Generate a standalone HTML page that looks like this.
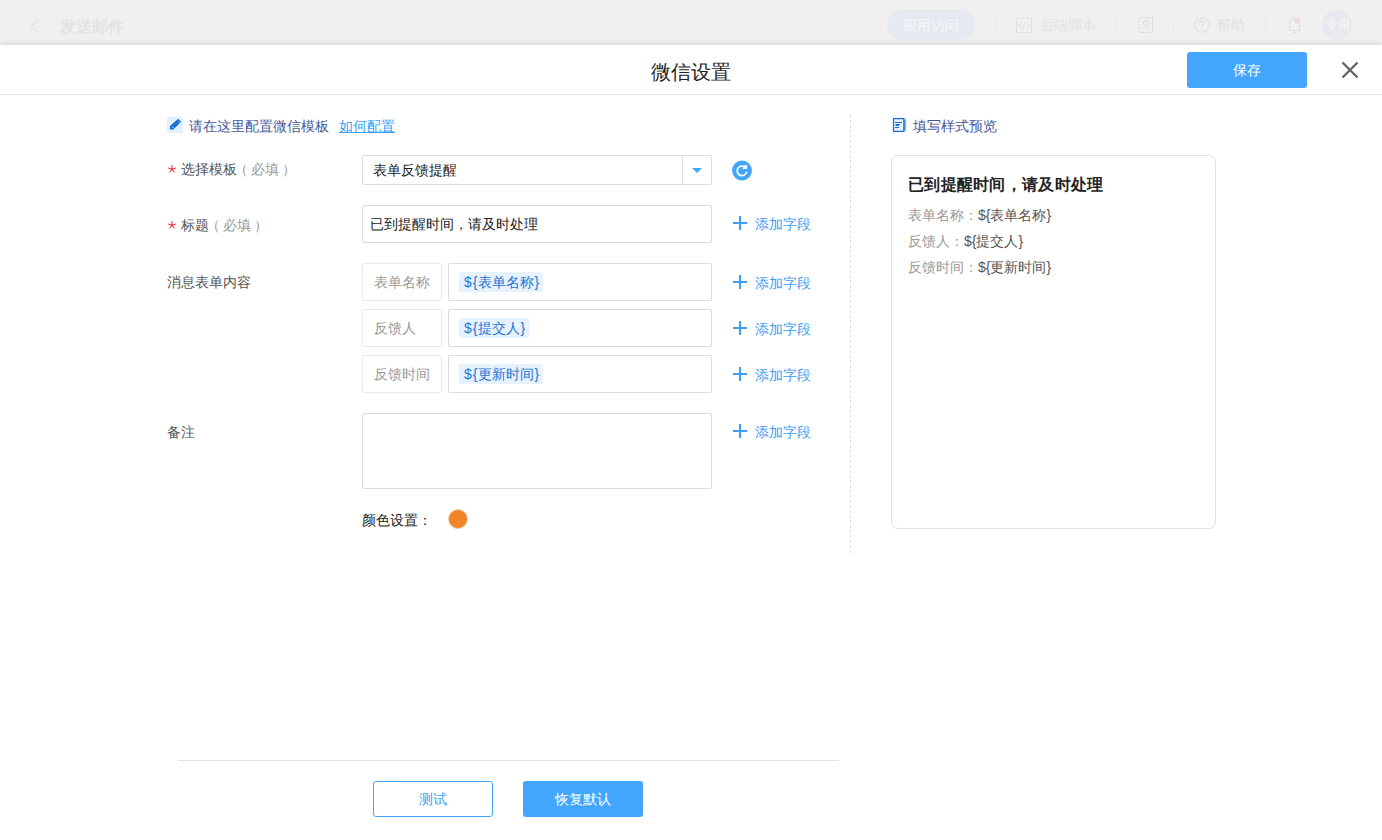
<!DOCTYPE html>
<html><head><meta charset="utf-8">
<style>
*{box-sizing:border-box;margin:0;padding:0}
html,body{width:1382px;height:840px;overflow:hidden;background:#fff;font-family:"Liberation Sans",sans-serif;font-size:14px;color:#333}
.a{position:absolute;white-space:nowrap}
#top{position:absolute;left:0;top:0;width:1382px;height:45px;background:#f0f0f0}
#modal{position:absolute;left:0;top:45px;width:1382px;height:795px;background:#fff;box-shadow:0 -1px 5px rgba(0,0,0,0.13)}
.t14{font-size:14px;line-height:16px}
.box{position:absolute;border:1px solid #ddd;border-radius:2px;background:#fff}
.lbox{position:absolute;border:1px solid #ebebeb;border-radius:2px;background:#fff}
.tag{position:absolute;background:#e6f2fd;border-radius:2px;color:#1f76d6}
.add{position:absolute;color:#3d9ef0}
.plus{position:absolute;width:14px;height:14px}
.plus:before{content:"";position:absolute;left:0;top:6px;width:14px;height:2px;background:#3d9ef0}
.plus:after{content:"";position:absolute;left:6px;top:0;width:2px;height:14px;background:#3d9ef0}
</style></head><body>
<div id="top">
  <svg class="a" style="left:29px;top:19px" width="11" height="15" viewBox="0 0 11 15"><path d="M9.5 1 L2 7.5 L9.5 14" fill="none" stroke="#e3e8ef" stroke-width="2"/></svg>
  <div class="a" style="left:60px;top:18px;font-size:16px;line-height:18px;font-weight:bold;color:#e3e3e3">发送邮件</div>
  <div class="a" style="left:887px;top:10px;width:88px;height:30px;border-radius:15px;background:#e5eaf0"></div>
  <div class="a" style="left:903px;top:17px;font-size:14px;line-height:16px;color:#f6f8fa">应用访问</div>
  <div class="a" style="left:995px;top:18px;width:1px;height:14px;background:#e9e9e9"></div>
  <svg class="a" style="left:1016px;top:18px" width="16" height="15" viewBox="0 0 16 15" fill="none" stroke="#e0e0e0" stroke-width="1.1"><rect x="0.5" y="0.5" width="15" height="14" rx="1"/><path d="M5 5 L3 7.5 L5 10 M11 5 L13 7.5 L11 10 M9 4.5 L7 10.5"/></svg>
  <div class="a" style="left:1040px;top:17px;font-size:14px;line-height:16px;color:#e2e2e2">后端脚本</div>
  <div class="a" style="left:1116px;top:18px;width:1px;height:14px;background:#e9e9e9"></div>
  <svg class="a" style="left:1136px;top:16px" width="18" height="18" viewBox="0 0 18 18" fill="none" stroke="#e0e0e0" stroke-width="1.1"><path d="M3.5 4.5 V1.5 H16.5 V16.5 H3.5 V13.5 M3.5 6 V6.5 M3.5 11 V11.5"/><path d="M1 6 H4 M1 9 H4 M1 12 H4"/><circle cx="10" cy="7" r="2.6"/><path d="M6 13 Q10 8 14 13"/></svg>
  <div class="a" style="left:1173px;top:18px;width:1px;height:14px;background:#e9e9e9"></div>
  <svg class="a" style="left:1194px;top:17px" width="16" height="16" viewBox="0 0 16 16" fill="none" stroke="#e0e0e0" stroke-width="1.1"><circle cx="8" cy="8" r="7.3"/><path d="M5.8 6.2 Q5.8 3.8 8 3.8 Q10.2 3.8 10.2 6 Q10.2 7.2 8.6 8 Q8 8.4 8 9.8"/><path d="M8 11.4 V12.4"/></svg>
  <div class="a" style="left:1217px;top:17px;font-size:14px;line-height:16px;color:#e0e0e0">帮助</div>
  <div class="a" style="left:1265px;top:18px;width:1px;height:14px;background:#e9e9e9"></div>
  <svg class="a" style="left:1287px;top:16px" width="16" height="18" viewBox="0 0 16 18" fill="none" stroke="#e0e0e0" stroke-width="1.1"><path d="M1.5 14.5 H13.5 M2.5 14.5 V7.5 Q2.5 3 7.5 1.5 Q12.5 3 12.5 7.5 V14.5"/><path d="M6 16.5 H9"/></svg>
  <div class="a" style="left:1294px;top:18px;width:6px;height:6px;border-radius:50%;background:#efdede"></div>
  <div class="a" style="left:1322px;top:10px;width:30px;height:30px;border-radius:50%;background:#e8e9ef"></div>
  <div class="a" style="left:1326px;top:17px;font-size:12px;line-height:14px;color:#f6f7fa">专用</div>
</div>
<div id="modal"></div>

<!-- header -->
<div class="a" style="left:651px;top:61px;font-size:20px;line-height:22px;color:#222">微信设置</div>
<div class="a" style="left:1187px;top:52px;width:120px;height:36px;border-radius:3px;background:#42a6ff;color:#fff;text-align:center;line-height:36px;font-size:14px">保存</div>
<svg class="a" style="left:1341px;top:61px" width="18" height="18" viewBox="0 0 18 18"><path d="M1.5 1.5 L16.5 16.5 M16.5 1.5 L1.5 16.5" stroke="#666" stroke-width="2.4" fill="none"/></svg>
<div class="a" style="left:0;top:94px;width:1382px;height:1px;background:#e3e3e3"></div>


<!-- form -->
<div class="a" style="left:167px;top:117px;width:16px;height:16px;border-radius:2px;background:#e2effd"></div>
<svg class="a" style="left:167px;top:117px" width="16" height="16" viewBox="0 0 16 16"><path d="M3 8.9 L11.2 1.8 L14.2 4.8 L6.4 12.6 L3 12.6Z" fill="#1b6fd6"/><path d="M5.2 9.6 L6.9 11.3 M11.6 4.4 L12.9 5.7" stroke="#e2effd" stroke-width="0.9"/></svg>
<div class="a t14" style="left:189px;top:118px;color:#4a5899">请在这里配置微信模板</div>
<div class="a t14" style="left:339px;top:118px;color:#3a9ef5;text-decoration:underline">如何配置</div>

<svg class="a" style="left:166px;top:163px" width="12" height="12" viewBox="0 0 12 12"><path d="M6.00 6.20 L6.00 2.60 M6.00 6.20 L9.42 5.09 M6.00 6.20 L8.12 9.11 M6.00 6.20 L3.88 9.11 M6.00 6.20 L2.58 5.09 " stroke="#f01820" stroke-width="1" stroke-linecap="round"/></svg>
<div class="a t14" style="left:181px;top:161px;color:#555">选择模板<span style="color:#999"><span style="position:relative;left:-3px">（</span>必填<span style="position:relative;left:3px">）</span></span></div>
<div class="box" style="left:362px;top:155px;width:350px;height:30px"></div>
<div class="a" style="left:682px;top:156px;width:1px;height:28px;background:#ddd"></div>
<svg class="a" style="left:692px;top:168px" width="10" height="5" viewBox="0 0 10 5"><path d="M0 0 L10 0 L5 5Z" fill="#42a6ff"/></svg>
<div class="a t14" style="left:373px;top:162px;color:#222">表单反馈提醒</div>
<svg class="a" style="left:732px;top:160px" width="20" height="21" viewBox="0 0 20 21"><circle cx="10" cy="10.5" r="10" fill="#42a6ff"/><path d="M14.73 11.63 A4.8 4.8 0 1 1 12.4 6.64" fill="none" stroke="#fff" stroke-width="1.7"/><path d="M12.6 4.9 L15.2 4.9 L15.2 8.9 L10.4 8.9Z" fill="#fff"/></svg>

<svg class="a" style="left:166px;top:219px" width="12" height="12" viewBox="0 0 12 12"><path d="M6.00 6.20 L6.00 2.60 M6.00 6.20 L9.42 5.09 M6.00 6.20 L8.12 9.11 M6.00 6.20 L3.88 9.11 M6.00 6.20 L2.58 5.09 " stroke="#f01820" stroke-width="1" stroke-linecap="round"/></svg>
<div class="a t14" style="left:181px;top:217px;color:#555">标题<span style="color:#999"><span style="position:relative;left:-3px">（</span>必填<span style="position:relative;left:3px">）</span></span></div>
<div class="box" style="left:362px;top:205px;width:350px;height:38px"></div>
<div class="a t14" style="left:370px;top:216px;color:#222">已到提醒时间，请及时处理</div>
<div class="plus" style="left:733px;top:216px"></div>
<div class="a t14 add" style="left:755px;top:216px">添加字段</div>

<div class="a t14" style="left:167px;top:274px;color:#555">消息表单内容</div>
<div class="lbox" style="left:362px;top:263px;width:80px;height:38px"></div>
<div class="a t14" style="left:374px;top:274px;color:#999">表单名称</div>
<div class="box" style="left:448px;top:263px;width:264px;height:38px"></div>
<div class="tag" style="left:459px;top:272px;width:84px;height:20px"></div>
<div class="a t14" style="left:464px;top:274px;color:#1f76d6"><span style="letter-spacing:1px">${</span>表单名称}</div>
<div class="plus" style="left:733px;top:275px"></div>
<div class="a t14 add" style="left:755px;top:275px">添加字段</div>
<div class="lbox" style="left:362px;top:309px;width:80px;height:38px"></div>
<div class="a t14" style="left:374px;top:320px;color:#999">反馈人</div>
<div class="box" style="left:448px;top:309px;width:264px;height:38px"></div>
<div class="tag" style="left:459px;top:318px;width:70px;height:20px"></div>
<div class="a t14" style="left:464px;top:320px;color:#1f76d6"><span style="letter-spacing:1px">${</span>提交人}</div>
<div class="plus" style="left:733px;top:321px"></div>
<div class="a t14 add" style="left:755px;top:321px">添加字段</div>
<div class="lbox" style="left:362px;top:355px;width:80px;height:38px"></div>
<div class="a t14" style="left:374px;top:366px;color:#999">反馈时间</div>
<div class="box" style="left:448px;top:355px;width:264px;height:38px"></div>
<div class="tag" style="left:459px;top:364px;width:84px;height:20px"></div>
<div class="a t14" style="left:464px;top:366px;color:#1f76d6"><span style="letter-spacing:1px">${</span>更新时间}</div>
<div class="plus" style="left:733px;top:367px"></div>
<div class="a t14 add" style="left:755px;top:367px">添加字段</div>

<div class="a t14" style="left:167px;top:424px;color:#555">备注</div>
<div class="box" style="left:362px;top:413px;width:350px;height:76px"></div>
<div class="plus" style="left:733px;top:424px"></div>
<div class="a t14 add" style="left:755px;top:424px">添加字段</div>
<div class="a t14" style="left:362px;top:512px;color:#222">颜色设置：</div>
<div class="a" style="left:448px;top:509px;width:20px;height:20px;border-radius:50%;background:#f28627;border:1px solid #e9d2bd"></div>

<!-- divider -->
<div class="a" style="left:850px;top:115px;width:1px;height:440px;background:repeating-linear-gradient(to bottom,#dcdcdc 0,#dcdcdc 3px,transparent 3px,transparent 5px)"></div>

<!-- preview -->
<svg class="a" style="left:888px;top:113px" width="22" height="22" viewBox="0 0 22 22"><rect x="3.5" y="4" width="15.5" height="16" fill="#e8f3fe"/><path d="M5.6 5.6 H15.8 V18.4 H5.6Z" fill="none" stroke="#1b6fd6" stroke-width="1.2"/><path d="M16.9 6.5 V17.5" stroke="#1b6fd6" stroke-width="1.1"/><path d="M7 9.5 H14" stroke="#1b6fd6" stroke-width="1.1"/><path d="M7 10.9 H12 L11 12.9 H8Z" fill="#1b6fd6"/><path d="M7 14.5 H11" stroke="#1b6fd6" stroke-width="1.1"/></svg>
<div class="a t14" style="left:913px;top:118px;color:#4a5899">填写样式预览</div>
<div class="a" style="left:891px;top:155px;width:325px;height:374px;border:1px solid #e2e2e2;border-radius:7px"></div>
<div class="a" style="left:908px;top:176px;font-size:16px;line-height:18px;font-weight:bold;color:#222;letter-spacing:0.3px">已到提醒时间，请及时处理</div>
<div class="a t14" style="left:908px;top:207px;color:#999">表单名称：<span style="color:#555">${表单名称}</span></div>
<div class="a t14" style="left:908px;top:233px;color:#999">反馈人：<span style="color:#555">${提交人}</span></div>
<div class="a t14" style="left:908px;top:259px;color:#999">反馈时间：<span style="color:#555">${更新时间}</span></div>

<!-- footer -->
<div class="a" style="left:178px;top:760px;width:661px;height:1px;background:#e4e4e4"></div>
<div class="a" style="left:373px;top:781px;width:120px;height:36px;border:1px solid #42a6ff;border-radius:3px;color:#3d9ef0;text-align:center;line-height:34px;font-size:14px">测试</div>
<div class="a" style="left:523px;top:781px;width:120px;height:36px;background:#42a6ff;border-radius:3px;color:#fff;text-align:center;line-height:36px;font-size:14px">恢复默认</div>
</body></html>
